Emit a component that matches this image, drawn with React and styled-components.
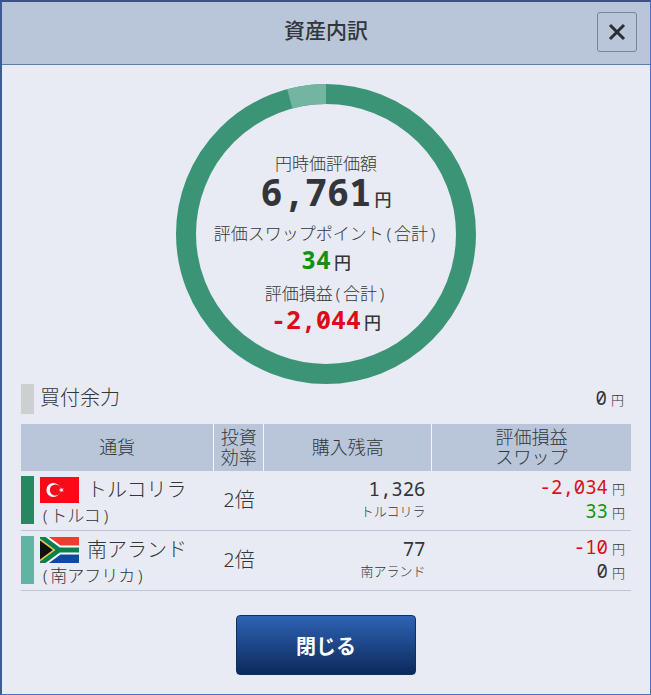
import React from 'react';
import styled, { createGlobalStyle, ThemeProvider } from 'styled-components';

const theme = {
  colors: {
    text: '#333538',
    panel: '#e8ebf3',
    header: '#b9c6da',
    line: '#bcc6d8',
    gain: '#129112',
    loss: '#dc0d18',
  },
  font: '"Noto Sans Mono", "Noto Sans CJK JP", sans-serif',
};

const GlobalStyle = createGlobalStyle`
  *, *::before, *::after {
    box-sizing: border-box;
  }

  body {
    margin: 0;
    background: ${props => props.theme.colors.panel};
    color: ${props => props.theme.colors.text};
    font-family: ${props => props.theme.font};
    font-weight: 300;
  }
`;

const Dialog = styled.section`
  display: flex;
  flex-direction: column;
  min-height: 100vh;
  border: 1px solid #4474c4;
  border-top: 2px solid #3b5283;
  border-left: 2px solid #3e5c94;
  background: ${props => props.theme.colors.panel};
`;

const Header = styled.header`
  display: grid;
  grid-template-columns: 40px 1fr 40px;
  align-items: start;
  padding: 10px 13px 12px;
  border-bottom: 1px solid #5580ab;
  background: ${props => props.theme.colors.header};
`;

const Title = styled.h1`
  grid-column: 2;
  margin: 0;
  font-size: 21px;
  line-height: 36px;
  font-weight: 500;
  text-align: center;
`;

const CloseIconButton = styled.button`
  display: flex;
  align-items: center;
  justify-content: center;
  height: 40px;
  padding: 0;
  border: 1px solid #76839a;
  border-radius: 3px;
  background: transparent;
  color: #2b2d30;
`;

const Body = styled.div`
  display: flex;
  flex-direction: column;
  padding: 19px;
`;

const Chart = styled.div`
  display: grid;
  place-items: center;

  > * {
    grid-area: 1 / 1;
  }
`;

const Summary = styled.dl`
  display: flex;
  flex-direction: column;
  margin: 0;
  padding-top: 26px;
  text-align: center;
`;

const SummaryLabel = styled.dt`
  font-size: 17px;
  line-height: 24px;
`;

const SummaryValue = styled.dd`
  display: flex;
  align-items: baseline;
  justify-content: center;
  gap: 3px;
  margin: 0 0 6px;
  font-size: 17px;
  line-height: ${props => (props.$large ? '32px' : '26px')};
  font-weight: 500;
`;

const Figure = styled.span`
  color: ${props => (props.$tone ? props.theme.colors[props.$tone] : 'inherit')};
  font-size: ${props => props.$size || '19px'};
  font-weight: ${props => (props.$bold ? 700 : 400)};
  font-feature-settings: 'zero';
`;

const Power = styled.div`
  display: flex;
  align-items: center;
  gap: 6px;
  padding-right: 7px;
  font-size: 20px;
  line-height: 30px;
`;

const PowerLabel = styled.span`
  flex: 1;
  line-height: 28px;
  padding-bottom: 2px;
`;

const Marker = styled.span`
  flex: none;
  align-self: stretch;
  width: 13px;
  background: ${props => props.$color};
`;

const Table = styled.table`
  width: 100%;
  margin-top: 10px;
  border-collapse: collapse;
  table-layout: fixed;
`;

const HeadCell = styled.th`
  width: ${props => props.$width};
  height: 47px;
  padding: 0 0 2px;
  border-right: 1px solid #f4f6fa;
  background: ${props => props.theme.colors.header};
  font-size: 18px;
  line-height: 20px;
  font-weight: 300;

  &:last-child {
    border-right: 0;
  }
`;

const Cell = styled.td`
  padding: ${props => (props.$flush ? '5px 0 6px' : '5px 6px 6px')};
  border-bottom: 1px solid ${props => props.theme.colors.line};
  font-size: 20px;
  line-height: 22px;
  text-align: ${props => props.$align || 'left'};
`;

const Currency = styled.div`
  display: flex;
  gap: 6px;
  height: 48px;
`;

const CurrencyName = styled.div`
  display: flex;
  align-items: center;
  gap: 8px;
  line-height: 27px;
`;

const Country = styled.div`
  padding-top: 2px;
  font-size: 17px;
  line-height: 22px;
`;

const Amount = styled.div`
  display: flex;
  align-items: baseline;
  justify-content: flex-end;
  gap: 4px;
  line-height: 22px;
`;

const Unit = styled.small`
  font-size: 13px;
`;

const CloseButton = styled.button`
  align-self: center;
  width: 180px;
  height: 60px;
  margin-top: 24px;
  border: 1px solid #12305f;
  border-radius: 4px;
  background: linear-gradient(#2e63b4, #0b2a5c);
  color: #fff;
  font-family: inherit;
  font-size: 20px;
  font-weight: 700;
`;

const Donut = () => (
  <svg width="300" height="300" viewBox="-150 -150 300 300" aria-hidden="true">
    <circle r="140" fill="none" stroke="#3c9477" strokeWidth="20" />
    <path
      d="M-36.2 -135.2A140 140 0 0 1 0 -140"
      fill="none"
      stroke="#72b5a0"
      strokeWidth="20"
    />
  </svg>
);

const TurkeyFlag = () => (
  <svg width="39" height="26" viewBox="0 0 39 26" aria-hidden="true">
    <path fill="#f80a18" d="M0 0h39v26H0z" />
    <circle cx="13.4" cy="13" r="7" fill="#fff" />
    <circle cx="15.4" cy="13" r="5.6" fill="#f80a18" />
    <path
      fill="#fff"
      d="M18.6 13l2-.7v-2.1l1.3 1.7 2-.7-1.3 1.8 1.3 1.8-2-.7-1.3 1.7v-2.1z"
    />
  </svg>
);

const SouthAfricaFlag = () => (
  <svg width="39" height="26" viewBox="0 0 39 26" aria-hidden="true">
    <path fill="#ee3d2e" d="M0 0h39v13H0z" />
    <path fill="#0c4ba0" d="M0 13h39v13H0z" />
    <path fill="none" stroke="#fff" strokeWidth="9" d="M0 -1l19 14L0 27M18 13h21" />
    <path fill="none" stroke="#08804f" strokeWidth="5" d="M0 -1l19 14L0 27M18 13h21" />
    <path fill="#e9c545" d="M0 1.6L15.4 13 0 24.4z" />
    <path fill="#111" d="M0 3.6L12.8 13 0 22.4z" />
  </svg>
);

const summary = [
  { label: '円時価評価額', value: '6,761', size: '37px', large: true },
  { label: '評価スワップポイント(合計)', value: '34', size: '25px', tone: 'gain' },
  { label: '評価損益(合計)', value: '-2,044', size: '25px', tone: 'loss' },
];

const holdings = [
  {
    name: 'トルコリラ',
    country: 'トルコ',
    Flag: TurkeyFlag,
    color: '#258861',
    leverage: '2倍',
    balance: '1,326',
    profit: '-2,034',
    swap: '33',
  },
  {
    name: '南アランド',
    country: '南アフリカ',
    Flag: SouthAfricaFlag,
    color: '#5fb5a0',
    leverage: '2倍',
    balance: '77',
    profit: '-10',
    swap: '0',
  },
];

const getTone = value => {
  if (value.startsWith('-')) return 'loss';
  return value === '0' ? undefined : 'gain';
};

const Yen = ({ value }) => (
  <Amount>
    <Figure $tone={getTone(value)}>{value}</Figure>
    <Unit>円</Unit>
  </Amount>
);

const App = () => (
  <ThemeProvider theme={theme}>
    <GlobalStyle />
    <Dialog role="dialog" aria-labelledby="dialog-title">
      <Header>
        <Title id="dialog-title">資産内訳</Title>
        <CloseIconButton type="button" aria-label="閉じる">
          <svg width="18" height="18" viewBox="0 0 18 18" aria-hidden="true">
            <path d="M2 2l14 14M16 2L2 16" stroke="currentColor" strokeWidth="3" />
          </svg>
        </CloseIconButton>
      </Header>

      <Body>
        <Chart>
          <Donut />
          <Summary>
            {summary.map(({ label, value, size, tone, large }) => (
              <React.Fragment key={label}>
                <SummaryLabel>{label}</SummaryLabel>
                <SummaryValue $large={large}>
                  <Figure $size={size} $tone={tone} $bold>
                    {value}
                  </Figure>
                  <span>円</span>
                </SummaryValue>
              </React.Fragment>
            ))}
          </Summary>
        </Chart>

        <Power>
          <Marker $color="#cbd0d0" />
          <PowerLabel>買付余力</PowerLabel>
          <Yen value="0" />
        </Power>

        <Table>
          <thead>
            <tr>
              <HeadCell $width="31.6%">通貨</HeadCell>
              <HeadCell $width="8.2%">
                投資
                <br />
                効率
              </HeadCell>
              <HeadCell $width="27.5%">購入残高</HeadCell>
              <HeadCell>
                評価損益
                <br />
                スワップ
              </HeadCell>
            </tr>
          </thead>
          <tbody>
            {holdings.map(({ name, country, Flag, color, leverage, balance, profit, swap }) => (
              <tr key={name}>
                <Cell $flush>
                  <Currency>
                    <Marker $color={color} />
                    <div>
                      <CurrencyName>
                        <Flag />
                        {name}
                      </CurrencyName>
                      <Country>({country})</Country>
                    </div>
                  </Currency>
                </Cell>
                <Cell $flush $align="center">
                  {leverage}
                </Cell>
                <Cell $align="right">
                  <Amount>
                    <Figure>{balance}</Figure>
                  </Amount>
                  <Amount>
                    <Unit>{name}</Unit>
                  </Amount>
                </Cell>
                <Cell $align="right">
                  <Yen value={profit} />
                  <Yen value={swap} />
                </Cell>
              </tr>
            ))}
          </tbody>
        </Table>

        <CloseButton type="button">閉じる</CloseButton>
      </Body>
    </Dialog>
  </ThemeProvider>
);

export default App;
